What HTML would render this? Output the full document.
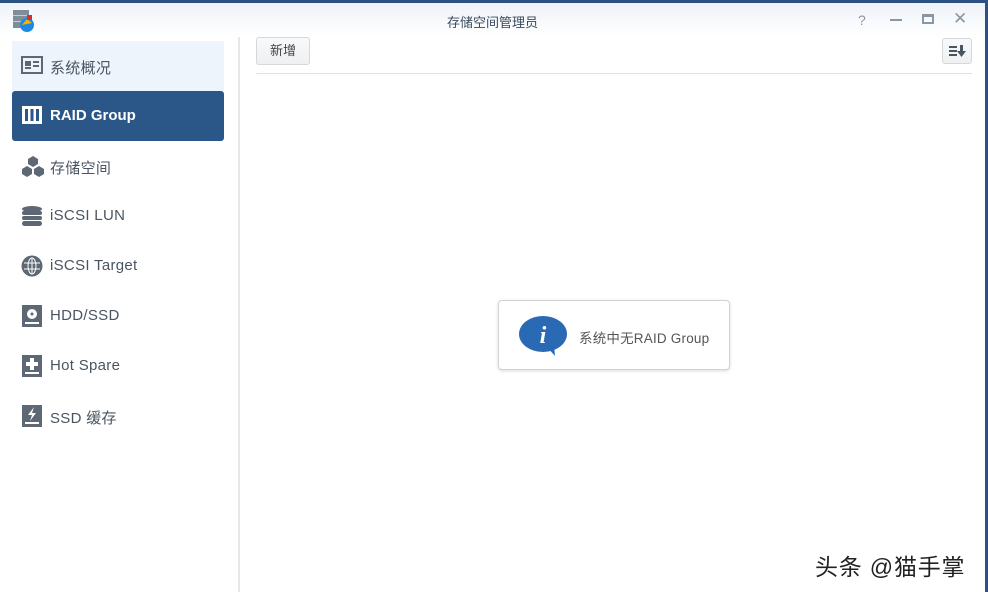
<!DOCTYPE html>
<html><head><meta charset="utf-8"><style>
*{margin:0;padding:0;box-sizing:border-box}
body{width:988px;height:592px;overflow:hidden;background:#fff;font-family:"Liberation Sans","Noto Sans CJK SC",sans-serif;position:relative}
.top{position:absolute;left:0;top:0;width:988px;height:3px;background:#2c5283}
.rb{position:absolute;right:0;top:0;width:3px;height:592px;background:#2c5283}
.title{position:absolute;left:0;top:3px;width:985px;height:34px;background:linear-gradient(#eef3f8,#fff)}
.title .t{position:absolute;left:0;width:985px;top:9px;text-align:center;font-size:13px;color:#3a4a5e}
.ctl{position:absolute;top:9px;color:#8a96a3;font-size:14px}
.item{position:absolute;left:12px;width:212px;height:50px;font-size:15px;color:#4a5562}
.item span{position:absolute;left:38px;top:16px;letter-spacing:0.3px}
.item svg{position:absolute;left:9px;top:14px}
.vline{position:absolute;left:238px;top:37px;width:2px;height:555px;background:#e6e9ec}
.btn{position:absolute;border:1px solid #d3d8dd;border-radius:3px;background:linear-gradient(#f8f9fa,#eef0f2)}
.hl{position:absolute;left:256px;top:73px;width:716px;height:1px;background:#dfe3e7}
.box{position:absolute;left:498px;top:300px;width:232px;height:70px;border:1px solid #cfd4d9;border-radius:4px;box-shadow:0 1px 3px rgba(0,0,0,.15);background:#fff}
</style></head><body>
<div class="top"></div><div class="rb"></div>
<div class="title">
<svg style="position:absolute;left:12px;top:6px" width="24" height="24"><rect x="1" y="1" width="16" height="18" fill="#7f8c99"/><rect x="1" y="6" width="16" height="1" fill="#ccc"/><rect x="1" y="12" width="16" height="1" fill="#ccc"/><circle cx="15" cy="16" r="7" fill="#1e88e5"/><path d="M10 16 L15 10 L20 14 Z" fill="#f6b300"/><rect x="15" y="6" width="5" height="5" fill="#d32f2f"/></svg>
<div class="t">存储空间管理员</div>
<div class="ctl" style="left:858px">?</div>
<div style="position:absolute;left:890px;top:16px;width:12px;height:2px;background:#8a96a3"></div>
<div style="position:absolute;left:922px;top:11px;width:12px;height:10px;border:2px solid #8a96a3;border-top-width:3px"></div>
<div class="ctl" style="left:953px;top:6px;font-size:17px">✕</div>
</div>
<div class="item" style="top:41px;background:#eef4fb"><svg width="22" height="20"><rect x="1" y="2" width="20" height="16" fill="none" stroke="#5e6874" stroke-width="2"/><rect x="4" y="6" width="6" height="5" fill="#5e6874"/><rect x="4" y="12" width="6" height="2" fill="#5e6874"/><rect x="12" y="6" width="6" height="2" fill="#5e6874"/><rect x="12" y="10" width="6" height="2" fill="#5e6874"/></svg><span>系统概况</span></div>
<div class="item" style="top:91px;background:#2b5688;border-radius:3px;color:#fff;font-weight:bold;font-size:15px"><svg width="22" height="20"><rect x="1" y="1" width="20" height="18" fill="#fff"/><rect x="4" y="4" width="3" height="12" fill="#2b5688"/><rect x="9.5" y="4" width="3" height="12" fill="#2b5688"/><rect x="15" y="4" width="3" height="12" fill="#2b5688"/></svg><span style="top:16px;letter-spacing:0">RAID Group</span></div>
<div class="item" style="top:141px"><svg width="24" height="24"><path d="M12 1l5 3v5l-5 3-5-3V4z M6 11l5 3v5l-5 3-5-3v-5z M18 11l5 3v5l-5 3-5-3v-5z" fill="#5e6874"/></svg><span>存储空间</span></div>
<div class="item" style="top:191px"><svg width="22" height="22"><ellipse cx="11" cy="4" rx="10" ry="3" fill="#5e6874"/><rect x="1" y="6" width="20" height="4" rx="2" fill="#5e6874"/><rect x="1" y="11" width="20" height="4" rx="2" fill="#5e6874"/><rect x="1" y="16" width="20" height="5" rx="2.5" fill="#5e6874"/></svg><span>iSCSI LUN</span></div>
<div class="item" style="top:241px"><svg width="22" height="22"><circle cx="11" cy="11" r="10.5" fill="#5e6874"/><g stroke="#fff" stroke-width="1" fill="none"><ellipse cx="11" cy="11" rx="4" ry="8"/><line x1="11" y1="3" x2="11" y2="19"/><line x1="3" y1="8" x2="19" y2="8"/><line x1="3" y1="14" x2="19" y2="14"/></g></svg><span>iSCSI Target</span></div>
<div class="item" style="top:291px"><svg width="22" height="22"><rect x="1" y="0" width="20" height="22" fill="#5e6874"/><circle cx="11" cy="9" r="5" fill="#fff"/><circle cx="11" cy="9" r="1.5" fill="#5e6874"/><rect x="4" y="17" width="14" height="2" fill="#fff"/></svg><span>HDD/SSD</span></div>
<div class="item" style="top:341px"><svg width="22" height="22"><rect x="1" y="0" width="20" height="22" fill="#5e6874"/><rect x="9" y="3" width="4" height="12" fill="#fff"/><rect x="5" y="7" width="12" height="4" fill="#fff"/><rect x="4" y="17" width="14" height="2" fill="#fff"/></svg><span>Hot Spare</span></div>
<div class="item" style="top:391px"><svg width="22" height="22"><rect x="1" y="0" width="20" height="22" fill="#5e6874"/><path d="M13 2L7 10h4l-2 6 6-8h-4z" fill="#fff"/><rect x="4" y="17" width="14" height="2" fill="#fff"/></svg><span>SSD 缓存</span></div>
<div class="vline"></div>
<div class="btn" style="left:256px;top:37px;width:54px;height:28px;font-size:13px;color:#444;text-align:center;line-height:26px">新增</div>
<div class="btn" style="left:942px;top:38px;width:30px;height:26px"><svg width="28" height="24"><g fill="#4a5562"><rect x="6" y="7" width="8" height="2"/><rect x="6" y="11" width="8" height="2"/><rect x="6" y="15" width="8" height="2"/><rect x="17" y="6" width="3" height="7"/><path d="M14 12h9l-4.5 6z"/></g></svg></div>
<div class="hl"></div>
<div class="box"><svg style="position:absolute;left:20px;top:14px" width="50" height="42"><ellipse cx="24" cy="19" rx="24" ry="18" fill="#2a6ab5"/><path d="M28 32l8 9-1-11z" fill="#2a6ab5"/><text x="24" y="28" text-anchor="middle" font-family="Liberation Serif" font-style="italic" font-weight="bold" font-size="24" fill="#fff">i</text></svg><div style="position:absolute;left:80px;top:26px;font-size:13.5px;color:#555;letter-spacing:0.2px">系统中无RAID Group</div></div>
<div style="position:absolute;left:815px;top:548px;font-size:23px;letter-spacing:0.8px;color:#222;text-shadow:0 0 3px #fff">头条 @猫手掌</div>
</body></html>
